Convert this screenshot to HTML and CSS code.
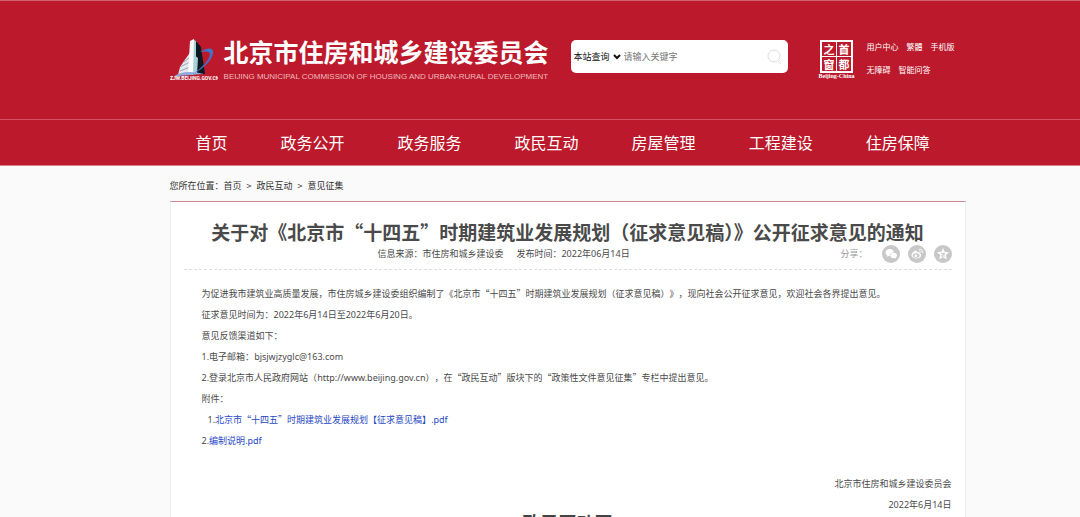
FILE: index.html
```html
<!DOCTYPE html>
<html lang="zh-CN">
<head>
<meta charset="utf-8">
<title>北京市住房和城乡建设委员会</title>
<link rel="stylesheet" href="styles.css">
</head>
<body>
<header class="site-header">
  <div class="wrap masthead">
    <svg class="logo" viewBox="0 0 48 44" role="img" aria-label="ZJW.BEIJING.GOV.CN">
      <path d="M8 37l2-8 4-6 5-7 4-6v27z" fill="#e4e7ec"/>
      <path d="M10 29l10-5M10 33l10-4M14 24l6-5" stroke="#9aa5b3" stroke-width="1" fill="none"/>
      <path d="M23 1l4 3v20l-4 12h-4z" fill="#a9cfd8"/>
      <path d="M26 3l5 6 4 27H22l4-13z" fill="#0b1a20"/>
      <path d="M24 17l4 3-1 16h-5z" fill="#a9cfd8"/>
      <path d="M20 3l4-2-1 36h-5z" fill="#fafbfc"/>
      <path d="M30 14c6-4 12-5 13-1 1 7-9 18-20 23 9-6 17-15 17-20 0-3-5-3-10-2z" fill="#4273c8"/>
      <path d="M3 39C13 32 24 34 34 36 24 37 13 37 3 39z" fill="#8fa8db"/>
      <text class="logo-text" x="0" y="42">ZJW.BEIJING.GOV.CN</text>
    </svg>
    <div class="brand">
      <div class="brand-name">北京市住房和城乡建设委员会</div>
      <div class="brand-en">BEIJING MUNICIPAL COMMISSION OF HOUSING AND URBAN-RURAL DEVELOPMENT</div>
    </div>
    <form class="search">
      <select class="scope" aria-label="查询范围"><option>本站查询</option></select>
      <svg class="chevron" viewBox="0 0 8 6" aria-hidden="true"><path d="M1 1l3 3 3-3"/></svg>
      <input class="keyword" type="text" placeholder="请输入关键字" aria-label="关键字">
      <button class="search-button" type="button" aria-label="搜索"><svg viewBox="0 0 16 16"><circle cx="7" cy="7" r="6"/><path d="M11 12l3 3"/></svg></button>
    </form>
    <a class="capital" href="#">
      <span class="seal"><span>之</span><span>首</span><span>窗</span><span>都</span></span>
      <span class="seal-en">Beijing-China</span>
    </a>
    <div class="tools">
      <div class="tool-row"><a href="#">用户中心</a><a href="#">繁體</a><a href="#">手机版</a></div>
      <div class="tool-row"><a href="#">无障碍</a><a href="#">智能问答</a></div>
    </div>
  </div>
  <nav class="nav">
    <div class="wrap nav-list">
      <a href="#">首页</a><a href="#">政务公开</a><a href="#">政务服务</a><a href="#">政民互动</a><a href="#">房屋管理</a><a href="#">工程建设</a><a href="#">住房保障</a>
    </div>
  </nav>
</header>
<main class="wrap">
  <div class="crumbs"><span>您所在位置：</span><a href="#">首页</a><span class="sep">&gt;</span><a href="#">政民互动</a><span class="sep">&gt;</span><a href="#">意见征集</a></div>
  <article class="article">
    <h1>关于对《北京市“十四五”时期建筑业发展规划（征求意见稿）》公开征求意见的通知</h1>
    <div class="meta">
      <div class="source"><span>信息来源：市住房和城乡建设委</span><span>发布时间：<span class="latin">2022</span>年<span class="latin">06</span>月<span class="latin">14</span>日</span></div>
      <div class="share">
        <span class="share-label">分享：</span>
        <a href="#" aria-label="微信"><svg viewBox="0 0 18 18"><circle class="disc" cx="9" cy="9" r="9"/><path class="glyph" d="M8 4C5.500 4 3.500 5.500 3.500 7.600c0 1.200.6 2.200 1.600 2.900L4.700 12l1.700-.9 1.400.2C7.700 8.800 9.500 7.200 12 7.200 11.600 5.300 10 4 8 4z"/><path class="glyph" d="M11.700 7.800c-1.900 0-3.300 1.200-3.300 2.700s1.400 2.800 3.300 2.800l1.200-.2 1.300.7-.3-1.200c.8-.6 1.200-1.300 1.200-2.100 0-1.500-1.500-2.700-3.400-2.700z"/></svg></a>
        <a href="#" aria-label="微博"><svg viewBox="0 0 18 18"><circle class="disc" cx="9" cy="9" r="9"/><path class="glyph" d="M7.500 5.500C5.500 6 3.500 8.500 3.500 10.300c0 2 2.300 3.200 4.700 3.200 3 0 5-1.600 5-3.200 0-1-.8-1.500-1.600-1.700.3-1.600-1-1.900-2.800-1.200.3-1.500-.2-2-1.300-1.900z"/><ellipse class="disc" cx="8.200" cy="10.500" rx="3.300" ry="2.200"/><circle class="glyph" cx="7.800" cy="10.700" r="1.300"/><path class="ring" d="M11 4.300c2.500-.5 4.300 1.500 3.600 3.900M11.200 6.100c1.200-.2 1.900.6 1.600 1.700"/></svg></a>
        <a href="#" aria-label="QQ空间"><svg viewBox="0 0 18 18"><circle class="disc" cx="9" cy="9" r="9"/><path class="glyph" d="M9 3l1.700 3.800 4.300.5-3.100 2.800.8 4.200L9 12.200l-3.700 2.100.8-4.200L3 7.300l4.300-.5z"/><path class="mark" d="M7 8.500h4l-3.500 2.500H11"/></svg></a>
      </div>
    </div>
    <div class="content">
      <p>为促进我市建筑业高质量发展，市住房城乡建设委组织编制了《北京市“十四五”时期建筑业发展规划（征求意见稿）》，现向社会公开征求意见，欢迎社会各界提出意见。</p>
      <p>征求意见时间为：<span class="latin">2022</span>年<span class="latin">6</span>月<span class="latin">14</span>日至<span class="latin">2022</span>年<span class="latin">6</span>月<span class="latin">20</span>日。</p>
      <p>意见反馈渠道如下：</p>
      <p><span class="latin">1.</span>电子邮箱：<span class="latin">bjsjwjzyglc@163.com</span></p>
      <p><span class="latin">2.</span>登录北京市人民政府网站（<span class="latin">http://www.beijing.gov.cn</span>），在“政民互动”版块下的“政策性文件意见征集”专栏中提出意见。</p>
      <p>附件：</p>
      <p class="indent"><span class="latin">1.</span><a href="#">北京市“十四五”时期建筑业发展规划【征求意见稿】<span class="latin">.pdf</span></a></p>
      <p><span class="latin">2.</span><a href="#">编制说明<span class="latin">.pdf</span></a></p>
    </div>
    <div class="signature">
      <p>北京市住房和城乡建设委员会</p>
      <p><span class="latin">2022</span>年<span class="latin">6</span>月<span class="latin">14</span>日</p>
    </div>
    <h2>政民互动网</h2>
  </article>
</main>
</body>
</html>
```
FILE: styles.css
```css
* { box-sizing: border-box; }
body {
  margin: 0;
  height: 100vh;
  overflow: hidden;
  background: #fafafa;
  color: #4a4a4a;
  font: 9px/21px "Noto Sans CJK SC", "Noto Sans", sans-serif;
}
a { color: inherit; text-decoration: none; }
p, h1, h2 { margin: 0; }
.latin { font-family: "Noto Sans", sans-serif; }
.wrap { margin-left: 15.7%; margin-right: 10.6%; }

.site-header { background: #bc1a2c; color: #fff; border-top: 1px solid #d0616d; }
.masthead { display: flex; align-items: flex-start; padding-top: 37px; padding-bottom: 34px; }
.logo { width: 48px; height: 44px; margin-right: 6px; flex: none; }
.logo-text { font: bold 5px Roboto, sans-serif; fill: #fff; }
.brand { width: 328px; flex: none; white-space: nowrap; }
.brand-name { font-size: 25px; line-height: 26px; font-weight: 700; }
.brand-en { font: 8px/10px "Liberation Sans", sans-serif; color: #f0b9be; margin-top: 8px; }
.search {
  display: flex; align-items: center; flex: none;
  width: 217px; height: 33px; margin: 2px 0 0 19px; padding: 0 5px 0 3px;
  background: #fff; border-radius: 5px;
}
.scope { appearance: none; border: 0; padding: 0; background: none; color: #111; font: inherit; width: 37px; }
.chevron { width: 8px; height: 6px; margin: 0 3px 0 2px; fill: none; stroke: #111; stroke-width: 2; }
.keyword { flex: 1; min-width: 0; border: 0; padding: 0; background: none; font: inherit; outline: 0; }
.keyword::placeholder { color: #777; opacity: 1; }
.search-button { width: 16px; height: 16px; padding: 0; border: 0; background: none; }
.search-button svg { display: block; fill: none; stroke: #ddd; stroke-width: 1; }
.capital { display: flex; flex-direction: column; align-items: center; width: 38px; margin: 2px 0 0 30px; flex: none; }
.seal {
  display: grid; grid-template-columns: 14px 14px; grid-auto-rows: 14px; gap: 1px;
  padding: 2px; background: #fff;
}
.seal span { background: #bc1a2c; font: 11px/14px "Noto Sans CJK SC", sans-serif; font-weight: 700; text-align: center; }
.seal-en { font: bold 6px/7px "Liberation Serif", serif; }
.tools { margin: 1px 0 0 11px; line-height: 16px; font-size: 8px; white-space: nowrap; }
.tool-row { display: flex; gap: 8px; margin-bottom: 7px; }
.nav { border-top: 1px solid #cf5361; border-bottom: 1px solid #d98088; }
.nav-list { display: flex; gap: 53px; padding-left: 26px; font-size: 16px; line-height: 45px; white-space: nowrap; }

.crumbs { display: flex; padding: 9px 0 5px; color: #333; }
.sep { margin: 0 5px; }
.article {
  background: #fff; border: 1px solid #eee; border-top-color: #d08a90;
  padding: 17px 13px 0;
}
h1 { font-size: 19px; line-height: 26px; text-align: center; white-space: nowrap; }
.meta { display: flex; border-bottom: 1px dashed #ddd; line-height: 18px; padding-bottom: 6px; }
.source { flex: 1; display: flex; justify-content: center; gap: 13px; }
.share { display: flex; justify-content: flex-end; gap: 8px; width: 128px; color: #999; }
.share-label { margin-right: 6px; }
.share svg { display: block; width: 18px; height: 18px; }
.disc { fill: #c8c8c8; }
.glyph { fill: #fff; }
.ring { fill: none; stroke: #fff; stroke-width: 1; }
.mark { fill: none; stroke: #c8c8c8; stroke-width: 1; }
.content { padding: 13px 18px 0; text-spacing-trim: space-all; }
.content a { color: #1f48c4; }
.indent { padding-left: 6px; }
.signature { text-align: right; padding-top: 22px; }
h2 { font-size: 18px; line-height: 14px; text-align: center; color: #444; }
```
